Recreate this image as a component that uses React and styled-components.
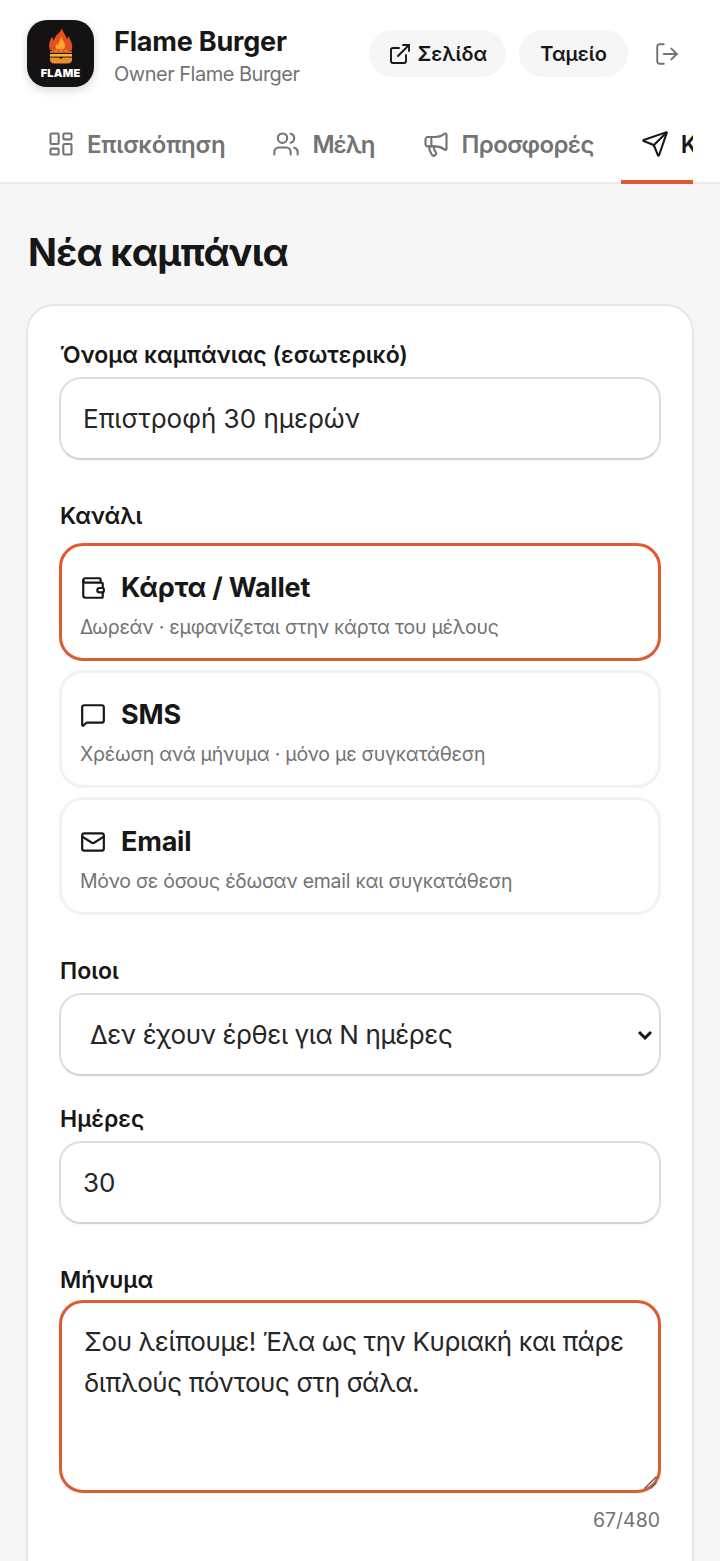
import React from "react";
import styled, { createGlobalStyle } from "styled-components";
import {
  ExternalLink,
  LayoutDashboard,
  LogOut,
  Mail,
  Megaphone,
  MessageSquare,
  Send,
  Users,
  Wallet,
} from "lucide-react";

const ACCENT = "#dd5a33";
const INK = "#171717";
const MUTED = "#737373";

const chevron =
  "url(\"data:image/svg+xml,%3Csvg xmlns='http://www.w3.org/2000/svg' width='16' height='10' viewBox='0 0 16 10'%3E%3Cpath d='M2 2l6 6 6-6' fill='none' stroke='%23171717' stroke-width='3'/%3E%3C/svg%3E\")";

const grip =
  "url(\"data:image/svg+xml,%3Csvg xmlns='http://www.w3.org/2000/svg' width='16' height='16' viewBox='0 0 16 16'%3E%3Cpath d='M2 14L14 2M8 14l6-6' fill='none' stroke='%23555' stroke-width='1.3'/%3E%3C/svg%3E\")";

const GlobalStyle = createGlobalStyle`
  html, body {
    margin: 0;
    padding: 0;
    background: #f6f6f6;
  }
  * {
    box-sizing: border-box;
  }
  body {
    font-family: Inter, "Noto Sans", sans-serif;
    color: ${INK};
  }
`;

const Page = styled.div`
  width: 720px;
  height: 1561px;
  overflow: hidden;
`;

const Header = styled.header`
  background: #fff;
  border-bottom: 2px solid #ececec;
  height: 184px;
`;

const TopRow = styled.div`
  display: flex;
  align-items: flex-start;
  height: 108px;
  padding: 20px 40px 0 27px;
`;

const Logo = styled.div`
  width: 67px;
  height: 67px;
  border-radius: 20px;
  background: #141212;
  box-shadow: 0 3px 10px rgba(0, 0, 0, 0.16);
  display: flex;
  flex-direction: column;
  align-items: center;
  justify-content: center;
  flex-shrink: 0;
`;

const LogoText = styled.span`
  font-family: Inter, sans-serif;
  font-weight: 900;
  font-size: 11px;
  line-height: 11px;
  letter-spacing: 0.2px;
  color: #fff;
  margin-top: 4px;
`;

const Brand = styled.div`
  margin: 5px 0 0 20px;
  flex: 1;
`;

const BrandName = styled.div`
  font-size: 27px;
  font-weight: 700;
  line-height: 34px;
  letter-spacing: -0.2px;
`;

const BrandRole = styled.div`
  font-size: 20px;
  line-height: 26px;
  color: ${MUTED};
  margin-top: 2px;
  letter-spacing: -0.5px;
`;

const PillButton = styled.button`
  height: 47px;
  margin: 10px 13px 0 0;
  border: 0;
  border-radius: 24px;
  background: #f6f6f6;
  color: ${INK};
  font: 600 20px Inter, sans-serif;
  display: flex;
  align-items: center;
  gap: 5px;
  padding: 0 ${(p) => p.$pad}px;
`;

const IconButton = styled.button`
  border: 0;
  background: none;
  padding: 0;
  margin: 21px 0 0 13px;
  display: flex;
  color: ${MUTED};
`;

const Tabs = styled.nav`
  display: flex;
  gap: 7px;
  height: 76px;
  margin: 0 27px;
  overflow: hidden;
`;

const Tab = styled.div`
  display: flex;
  align-items: center;
  gap: 12px;
  flex-shrink: 0;
  padding: ${(p) => (p.$active ? "0 20px 0" : "0 20px 4px")};
  height: 76px;
  font-size: 24px;
  font-weight: 600;
  letter-spacing: ${(p) => p.$spacing || -0.2}px;
  color: ${(p) => (p.$active ? INK : MUTED)};
  border-bottom: ${(p) => (p.$active ? `4px solid ${ACCENT}` : "0")};
`;

const Main = styled.main`
  padding: 42px 26px 0;
`;

const Title = styled.h1`
  margin: 0 0 26px 2px;
  font-size: 38px;
  line-height: 52px;
  font-weight: 700;
  letter-spacing: -0.8px;
`;

const Card = styled.section`
  background: #fff;
  border: 2px solid #e6e6e6;
  border-radius: 28px;
  padding: 34px 31px 60px;
`;

const Label = styled.div`
  font-size: 23px;
  line-height: 30px;
  font-weight: 600;
  margin: ${(p) => p.$top || 0}px 0 ${(p) => p.$bottom || 7}px 1px;
`;

const fieldStyles = `
  display: block;
  width: 100%;
  background: #fff;
  border: 2px solid #dedede;
  border-bottom-color: #d2d2d2;
  border-radius: 22px;
  box-shadow: 0 1px 2px rgba(0, 0, 0, 0.05);
  color: #262626;
  font: 400 26px Inter, "Noto Sans", sans-serif;
  outline: none;
`;

const TextInput = styled.input`
  ${fieldStyles}
  height: 83px;
  padding: 0 22px;
`;

const Select = styled.select`
  ${fieldStyles}
  height: 83px;
  padding: 0 40px 0 29px;
  letter-spacing: -0.4px;
  appearance: none;
  background: #fff ${chevron} no-repeat right 6px center;
`;

const MessageBox = styled.textarea`
  ${fieldStyles}
  height: 193px;
  padding: 18px 22px;
  line-height: 41px;
  letter-spacing: -0.4px;
  border: 3px solid ${ACCENT};
  border-radius: 24px;

  &::-webkit-resizer {
    background: ${grip} no-repeat center;
  }
`;

const Counter = styled.div`
  text-align: right;
  font-size: 19.5px;
  line-height: 26px;
  color: ${MUTED};
  margin: 14px 1px 0 0;
`;

const Channels = styled.div`
  display: flex;
  flex-direction: column;
  gap: 9px;
  margin-bottom: 41px;
`;

const Channel = styled.div`
  height: 118px;
  border-radius: 24px;
  border: ${(p) => (p.$selected ? `3px solid ${ACCENT}` : "3px solid #f2f2f2")};
  padding: 24px 18px 0;
`;

const ChannelHead = styled.div`
  display: flex;
  align-items: center;
  gap: 15px;
  font-size: 27px;
  line-height: 36px;
  font-weight: 700;
  letter-spacing: -0.2px;
`;

const ChannelHint = styled.div`
  font-size: 19.5px;
  line-height: 26px;
  color: ${MUTED};
  margin-top: 8px;
  letter-spacing: -0.25px;
`;

const channels = [
  { icon: Wallet, name: "Κάρτα / Wallet", hint: "Δωρεάν · εμφανίζεται στην κάρτα του μέλους", selected: true },
  { icon: MessageSquare, name: "SMS", hint: "Χρέωση ανά μήνυμα · μόνο με συγκατάθεση" },
  { icon: Mail, name: "Email", hint: "Μόνο σε όσους έδωσαν email και συγκατάθεση" },
];

const tabs = [
  { icon: LayoutDashboard, name: "Επισκόπηση" },
  { icon: Users, name: "Μέλη", spacing: -1 },
  { icon: Megaphone, name: "Προσφορές", spacing: -0.6 },
  { icon: Send, name: "Καμπάνιες", active: true },
];

function FlameMark() {
  return (
    <svg width="26" height="36" viewBox="0 0 26 36">
      <path d="M14 0c1 5 4 7 5 11 1-1 1-2 1-3 3 4 5 9 4 14H2C0 17 2 12 4 9c1 1 1 3 2 4 0-6 7-8 8-13z" fill="#e2511f" />
      <path d="M13 8c1 4 4 6 4 9 0 2-1 4-2 5h-5c-2-1-3-3-2-6 1 1 2 1 2 2 0-4 3-6 3-10z" fill="#f9a62b" />
      <path d="M2 24c0-4 22-4 22 0v1H2z" fill="#e2601f" />
      <circle cx="8" cy="23" r=".7" fill="#fbc04d" />
      <circle cx="13" cy="22.5" r=".7" fill="#fbc04d" />
      <circle cx="18" cy="23" r=".7" fill="#fbc04d" />
      <rect x="2" y="26" width="22" height="2.6" fill="#fab733" />
      <path d="M2 29.5h9l2 1.5 2-1.5h9V32c0 2-2 3.5-4 3.5H6c-2 0-4-1.5-4-3.5z" fill="#ee8a30" />
    </svg>
  );
}

export default function App() {
  return (
    <Page>
      <GlobalStyle />
      <Header>
        <TopRow>
          <Logo>
            <FlameMark />
            <LogoText>FLAME</LogoText>
          </Logo>
          <Brand>
            <BrandName>Flame Burger</BrandName>
            <BrandRole>Owner Flame Burger</BrandRole>
          </Brand>
          <PillButton $pad={19}>
            <ExternalLink size={24} strokeWidth={1.9} />
            Σελίδα
          </PillButton>
          <PillButton $pad={21}>Ταμείο</PillButton>
          <IconButton>
            <LogOut size={26} strokeWidth={1.8} />
          </IconButton>
        </TopRow>
        <Tabs>
          {tabs.map((t) => (
            <Tab key={t.name} $active={t.active} $spacing={t.spacing}>
              <t.icon size={28} strokeWidth={1.8} />
              {t.name}
            </Tab>
          ))}
        </Tabs>
      </Header>
      <Main>
        <Title>Νέα καμπάνια</Title>
        <Card>
          <Label>Όνομα καμπάνιας (εσωτερικό)</Label>
          <TextInput defaultValue="Επιστροφή 30 ημερών" />
          <Label $top={41} $bottom={12}>Κανάλι</Label>
          <Channels>
            {channels.map((c) => (
              <Channel key={c.name} $selected={c.selected}>
                <ChannelHead>
                  <c.icon size={26} strokeWidth={2} />
                  {c.name}
                </ChannelHead>
                <ChannelHint>{c.hint}</ChannelHint>
              </Channel>
            ))}
          </Channels>
          <Label>Ποιοι</Label>
          <Select defaultValue="n">
            <option value="n">Δεν έχουν έρθει για Ν ημέρες</option>
          </Select>
          <Label $top={28}>Ημέρες</Label>
          <TextInput defaultValue="30" />
          <Label $top={41} $bottom={5}>Μήνυμα</Label>
          <MessageBox defaultValue="Σου λείπουμε! Έλα ως την Κυριακή και πάρε διπλούς πόντους στη σάλα." />
          <Counter>67/480</Counter>
        </Card>
      </Main>
    </Page>
  );
}
